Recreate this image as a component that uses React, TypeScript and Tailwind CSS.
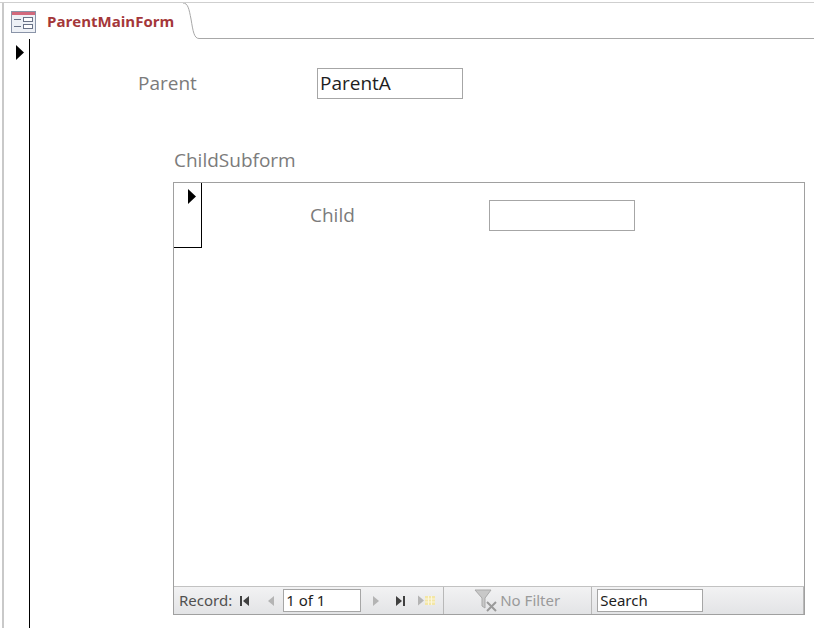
import { type FC } from 'react';

const FormIcon: FC = () => (
  <svg width="25" height="22" viewBox="0 0 25 22">
    <rect x="0.5" y="0.5" width="24" height="21" fill="#eef1f6" stroke="#8a94a8" />
    <rect x="1" y="1" width="23" height="3" fill="#d2697c" />
    <line x1="3" y1="8.5" x2="10" y2="8.5" stroke="#6a7388" />
    <rect x="12.5" y="6.5" width="9" height="4" fill="#fff" stroke="#6a7388" />
    <line x1="3" y1="15.5" x2="10" y2="15.5" stroke="#6a7388" />
    <rect x="12.5" y="13.5" width="9" height="4" fill="#fff" stroke="#6a7388" />
  </svg>
);

const Selector: FC = () => (
  <svg width="8" height="15" viewBox="0 0 8 15">
    <path d="M0 0 L8 7.5 L0 15 Z" fill="#000" />
  </svg>
);

const NavFirst: FC = () => (
  <svg width="10" height="10" viewBox="0 0 10 10">
    <rect x="0" y="0" width="2" height="10" fill="#404040" />
    <path d="M9 0 L3 5 L9 10 Z" fill="#404040" />
  </svg>
);

const NavPrev: FC = () => (
  <svg width="6" height="10" viewBox="0 0 6 10">
    <path d="M6 0 L0 5 L6 10 Z" fill="#b4b4b4" />
  </svg>
);

const NavNext: FC = () => (
  <svg width="6" height="10" viewBox="0 0 6 10">
    <path d="M0 0 L6 5 L0 10 Z" fill="#b4b4b4" />
  </svg>
);

const NavLast: FC = () => (
  <svg width="10" height="10" viewBox="0 0 10 10">
    <path d="M0 0 L6 5 L0 10 Z" fill="#404040" />
    <rect x="7" y="0" width="2" height="10" fill="#404040" />
  </svg>
);

const NavNew: FC = () => (
  <svg width="18" height="11" viewBox="0 0 18 11">
    <path d="M0 0.5 L6 5.5 L0 10.5 Z" fill="#b4b4b4" />
    <rect x="7" y="1" width="10" height="9" fill="#f3e6a6" />
    <path d="M7 4h10M7 7h10M10.5 1v9M13.5 1v9" stroke="#fbf6dc" strokeWidth="1" />
  </svg>
);

const FilterIcon: FC = () => (
  <svg width="26" height="24" viewBox="0 0 26 24">
    <path d="M1 1 H17 L11 9 V19 L8 17 V9 Z" fill="#c8c8c8" stroke="#a9a9a9" />
    <path d="M13 13 L22 22 M22 13 L13 22" stroke="#9a9a9a" strokeWidth="2" />
  </svg>
);

export default function App() {
  return (
    <div className="w-[814px] h-[628px] bg-white overflow-hidden flex flex-col font-['Open_Sans','Noto_Sans',sans-serif]">
      {/* tab strip */}
      <div className="h-[37px] flex border-t border-[#cfcfcf] mt-[2px] shrink-0">
        <div className="ml-[2px] w-[181px] border-l-2 border-[#c9c9c9] flex items-center pl-[7px] gap-[11px] pt-[1px]">
          <FormIcon />
          <span className="text-[15px] font-bold text-[#a4373a]">ParentMainForm</span>
        </div>
        <svg width="16" height="36" viewBox="0 0 16 36" className="shrink-0">
          <path d="M0 0 C5 0 6 6 8 16 C10 28 11 35.5 16 35.5" fill="none" stroke="#a8a8a8" />
        </svg>
        <div className="flex-1 border-b border-[#a8a8a8]" />
      </div>

      {/* form body */}
      <div className="flex-1 flex">
        <div className="ml-[2px] w-[28px] border-l-2 border-[#c9c9c9] border-r border-r-black pt-[6px] pl-[12px] shrink-0">
          <Selector />
        </div>
        <div className="flex-1 flex flex-col">
          <div className="flex items-center mt-[29px] h-[31px] pl-[108px]">
            <div className="w-[179px] text-[19px] text-[#7b7b7b]">Parent</div>
            <div className="w-[146px] h-[31px] border border-[#a6a6a6] pl-[2px] text-[19px] leading-[29px] text-[#1e1e1e]">
              ParentA
            </div>
          </div>

          <div className="mt-[49px] ml-[144px] h-[24px] leading-[24px] text-[19px] text-[#7b7b7b]">ChildSubform</div>

          {/* subform */}
          <div className="mt-[10px] ml-[143px] w-[632px] h-[433px] border border-[#a0a0a0] flex flex-col">
            <div className="flex-1 flex items-start">
              <div className="w-[28px] h-[65px] border-r border-b border-black pl-[14px] pt-[6px] shrink-0">
                <Selector />
              </div>
              <div className="flex items-center mt-[17px] pl-[108px]">
                <div className="w-[179px] text-[19px] text-[#7b7b7b]">Child</div>
                <div className="w-[146px] h-[31px] border border-[#a6a6a6]" />
              </div>
            </div>

            {/* navigation bar */}
            <div className="h-[28px] border-t border-[#c2c2c2] bg-gradient-to-b from-[#f2f2f3] to-[#e3e4e6] flex items-center text-[15px] font-['Noto_Sans','Open_Sans',sans-serif]">
              <span className="ml-[5px] text-[#505050]">Record:</span>
              <span className="ml-[8px] flex"><NavFirst /></span>
              <span className="ml-[18px] flex"><NavPrev /></span>
              <div className="ml-[9px] w-[78px] h-[23px] bg-white border border-[#a6a6a6] pl-[2px] leading-[21px] text-[#1e1e1e]">1 of 1</div>
              <span className="ml-[12px] flex"><NavNext /></span>
              <span className="ml-[17px] flex"><NavLast /></span>
              <span className="ml-[12px] flex"><NavNew /></span>
              <div className="ml-[7px] w-px h-full bg-[#b8b8b8]" />
              <span className="ml-[30px] flex"><FilterIcon /></span>
              <span className="text-[#9a9a9a]">No Filter</span>
              <div className="ml-[31px] w-px h-full bg-[#b8b8b8]" />
              <div className="ml-[5px] w-[106px] h-[23px] bg-white border border-[#a6a6a6] pl-[2px] leading-[21px] text-[#1e1e1e]">Search</div>
              <div className="flex-1" />
              <div className="w-px h-full bg-[#b8b8b8]" />
            </div>
          </div>
        </div>
      </div>
    </div>
  );
}
